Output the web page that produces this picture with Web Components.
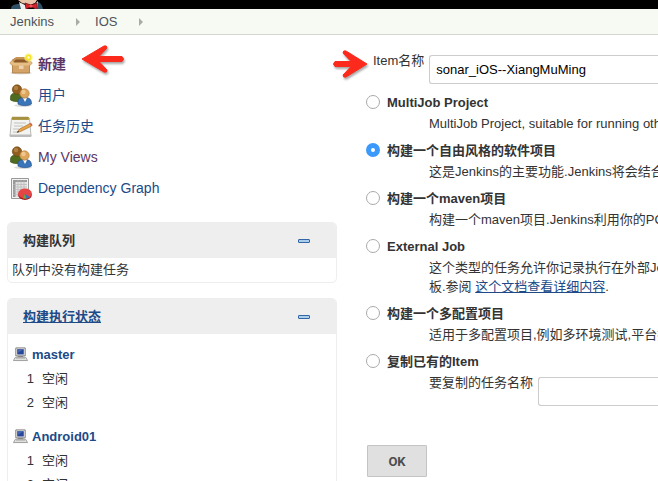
<!DOCTYPE html>
<html lang="zh-CN">
<head>
<meta charset="utf-8">
<meta name="viewport" content="width=device-width, initial-scale=1">
<title>New Item [Jenkins]</title>
<style>
  body {
    margin: 0;
    height: 100vh;
    overflow: hidden;
    background: #fff;
    color: #333;
    font: 13px/19px "Liberation Sans", "Noto Sans CJK SC", sans-serif;
  }
</style>
</head>
<body>
<jenkins-app></jenkins-app>

<script>
const icons = {
  package: `
    <svg viewBox="0 0 24 24">
      <ellipse cx="12" cy="20" rx="11" ry="1.500" fill="#ddd"/>
      <path d="M3.500 9h17v11h-17z" fill="#d3a368" stroke="#a9763a" stroke-width=".8"/>
      <path d="M3 7l3-2h12l3 2-1 3H4z" fill="#8b5a28"/>
      <path d="M4 6.500L7 4h11l2 2.500H7L4 9z" fill="#c79555"/>
      <path d="M.8 10L4 6.500 5.500 11 3 12.500zM23.300 10L20 6.500 18.500 11l2.500 1.500z" fill="#e4bc83" stroke="#b78345" stroke-width=".6"/>
      <path d="M3.500 9.500h17v3h-17z" fill="#e6bd82"/>
      <path d="M10 12.500h4.500V16H10z" fill="#ead2ae"/>
      <circle cx="19.500" cy="4.500" r="4.300" fill="#fff27a" opacity=".7"/>
      <circle cx="19.500" cy="4.500" r="3" fill="#f6e32e"/>
      <circle cx="19.500" cy="4.500" r="1.200" fill="#fffde0"/>
    </svg>`,
  users: `
    <svg viewBox="0 0 24 24">
      <ellipse cx="14" cy="21.500" rx="9" ry="1.500" fill="#ddd"/>
      <path d="M1.500 16c-.5-5 1-7 5.500-7 4 0 6 2 6.500 8-4 1-9 1-12-1z" fill="#4e6b20" stroke="#34480f" stroke-width=".6"/>
      <circle cx="8" cy="5.500" r="4.700" fill="#8f5d1f" stroke="#6b4210" stroke-width=".6"/>
      <circle cx="7" cy="4" r="2.200" fill="#b08040"/>
      <path d="M9 20c-.5-5 1-6.500 6.500-6.500s7 2 7 6.500c-3 2.200-10 2.200-13.500 0z" fill="#3b75b8" stroke="#204a87" stroke-width=".6"/>
      <path d="M14 14h4l-2 4z" fill="#fff"/>
      <circle cx="15.500" cy="9.500" r="4.700" fill="#dda65d" stroke="#b27430" stroke-width=".6"/>
      <circle cx="14.500" cy="8" r="2.200" fill="#f0c78d"/>
    </svg>`,
  notepad: `
    <svg viewBox="0 0 24 24">
      <path d="M2.500 3h18l1.500 18H1z" fill="#f3f3f1" stroke="#aaa" stroke-width=".8"/>
      <path d="M.8 19.500h21.500V22H.8z" fill="#bbb"/>
      <path d="M3 2h17v3H3z" fill="#b6a14f"/>
      <path d="M4 1.500v3m2-3v3m2-3v3m2-3v3m2-3v3m2-3v3m2-3v3m2-3v3" stroke="#8c7a2e" stroke-width=".8"/>
      <path d="M5 8h12M5 11h9M4 14h6M4 17h4" stroke="#c0c0c0"/>
      <path d="M8 17.500l2.500-3.500L21 8.500l1.700 2.500-11 5.500z" fill="#e9a246" stroke="#9c6825" stroke-width=".6"/>
      <path d="M20.500 8.700l1.500-1 1.700 2.500-1 .8z" fill="#d3604a"/>
      <path d="M8 17.500l1.200-1.800 1 1.200z" fill="#333"/>
    </svg>`,
  graph: `
    <svg viewBox="0 0 24 24">
      <path d="M2.500 1.500h17v20h-17z" fill="#f4f4f4" stroke="#999"/>
      <path d="M4 3h14v17H4z" fill="#e2e2e2"/>
      <path d="M4 3h14v2H4zM4 3h2.500v17H4z" fill="#999"/>
      <path d="M4 7.500h14M4 10h14M4 12.500h14M4 15h14M4 17.500h14M9 3v17M12 3v17M15 3v17" stroke="#b7b7b7" stroke-width=".7"/>
      <ellipse cx="16" cy="18" rx="6.800" ry="5" fill="#a81818"/>
      <ellipse cx="16" cy="16.500" rx="6.800" ry="5" fill="#e54545"/>
      <path d="M16 16.500l-2 5 3.500.3z" fill="#69a93e"/>
      <path d="M16 16.500l1.500 5.300 3.500-1.300z" fill="#3c72b4"/>
    </svg>`,
  computer: `
    <svg viewBox="0 0 16 16">
      <path d="M3 1.500h10v8.500H3z" fill="#eeeeec" stroke="#777"/>
      <path d="M4.500 3h7v5.500h-7z" fill="#26479a"/>
      <path d="M4.500 3h7L5 7z" fill="#4565b0"/>
      <path d="M5 10.500h6v1H5z" fill="#666"/>
      <path d="M2.500 11.500h11l2 3.500H.5z" fill="#e8e8e6" stroke="#999"/>
      <path d="M3 13h10" stroke="#b5b5b5"/>
    </svg>`,
  butler: `
    <svg viewBox="0 0 34 9">
      <path d="M1 9c0-4 4-5 9-5l6 5zM33 9c-1-4-2-6-5-7l-4 7z" fill="#2f4f66"/>
      <path d="M8 0h19l-2 3-5 2-8-2z" fill="#e8c3aa"/>
      <path d="M9 2l6 3 2 4h-6zM28 1l-3 3v5h2z" fill="#eee"/>
      <path d="M15 3l6 2 6-2v6l-6-2-5 2z" fill="#d8232f" stroke="#641514" stroke-width=".7"/>
      <circle cx="21" cy="6" r="1.600" fill="#f0555b"/>
    </svg>`,
  arrow: `
    <svg viewBox="0 0 48 32">
      <path d="M3 16L25 3q3-1 3 2L20 13.500h23q3 2.500 0 5H20l8 8.500q0 3-3 2z" fill="#fc2a1c" stroke="#fc2a1c" stroke-linejoin="round"/>
    </svg>`,
  'arrow-right': `
    <svg viewBox="0 0 40 32">
      <path d="M35 16L14 3q-3-1-3 2l8 8.500H3q-3 2.500 0 5h16L11 27q0 3 3 2z" fill="#fc2a1c" stroke="#fc2a1c" stroke-linejoin="round"/>
    </svg>`,
};

class JkIcon extends HTMLElement {
  constructor() {
    super();
    this.attachShadow({ mode: 'open' });
  }
  connectedCallback() {
    this.shadowRoot.innerHTML = `
    <style>
      :host {
        display: block;
        flex: none;
        width: 24px;
        height: 24px;
      }
      svg {
        display: block;
        width: 100%;
        height: 100%;
      }
    </style>
    ${icons[this.getAttribute('name')]}
    `;
  }
}

class TopBar extends HTMLElement {
  constructor() {
    super();
    this.attachShadow({ mode: 'open' });
  }
  connectedCallback() {
    this.shadowRoot.innerHTML = `
    <style>
      :host {
        display: block;
      }
      header {
        padding-left: 10px;
        background: #000;
      }
      header jk-icon {
        width: 34px;
        height: 9px;
      }
      ul {
        display: flex;
        align-items: center;
        margin: 0;
        padding: 0 10px;
        height: 25px;
        list-style: none;
        background: #f6faf2;
        border-bottom: 1px solid #d3d7cf;
      }
      li {
        display: flex;
        align-items: center;
      }
      li::after {
        content: "";
        margin: 0 15px 0 22px;
        border: 4px solid transparent;
        border-left-color: #a9aca6;
        border-right-width: 0;
      }
      a {
        color: #4d545d;
        text-decoration: none;
      }
    </style>
    <header><jk-icon name="butler"></jk-icon></header>
    <nav>
      <ul>
        <li><a href="#">Jenkins</a></li>
        <li><a href="#">IOS</a></li>
      </ul>
    </nav>
    `;
  }
}

class TaskLink extends HTMLElement {
  constructor() {
    super();
    this.attachShadow({ mode: 'open' });
  }
  connectedCallback() {
    this.shadowRoot.innerHTML = `
    <style>
      :host {
        display: block;
      }
      a {
        display: flex;
        align-items: center;
        gap: 5px;
        height: 31px;
        color: #204a87;
        font-size: 14px;
        text-decoration: none;
      }
      :host([visited]) a {
        color: #5c3566;
      }
      :host([current]) a {
        font-weight: bold;
      }
    </style>
    <a href="#"><jk-icon name="${this.getAttribute('icon')}"></jk-icon><span><slot></slot></span></a>
    `;
  }
}

class SidePane extends HTMLElement {
  constructor() {
    super();
    this.attachShadow({ mode: 'open' });
  }
  connectedCallback() {
    this.shadowRoot.innerHTML = `
    <style>
      :host {
        display: block;
        border: 1px solid #eee;
        border-radius: 5px;
        overflow: hidden;
      }
      .head {
        display: flex;
        align-items: center;
        justify-content: space-between;
        height: 35px;
        padding: 0 25px 0 15px;
        background: #eee;
        font-weight: bold;
      }
      button {
        width: 14px;
        height: 14px;
        padding: 5px 1px;
        border: 0;
        background: none;
      }
      button::before {
        content: "";
        display: block;
        box-sizing: border-box;
        width: 12px;
        height: 4px;
        border: 1px solid #3465a4;
        border-radius: 1px;
        background: #a9cdec;
      }
    </style>
    <div class="head">
      <slot name="title"></slot>
      <button type="button" aria-label="collapse"></button>
    </div>
    <slot></slot>
    `;
  }
}

class BuildNode extends HTMLElement {
  constructor() {
    super();
    this.attachShadow({ mode: 'open' });
  }
  connectedCallback() {
    this.shadowRoot.innerHTML = `
    <style>
      :host {
        display: block;
        padding: 8px 5px 2px;
      }
      a {
        display: flex;
        align-items: center;
        gap: 4px;
        height: 24px;
        color: #204a87;
        font-weight: bold;
        text-decoration: none;
      }
      jk-icon {
        width: 15px;
        height: 16px;
      }
      table {
        border-spacing: 0;
      }
      td {
        height: 24px;
        padding: 0;
      }
      td:first-child {
        width: 21px;
        padding-right: 8px;
        text-align: right;
        box-sizing: content-box;
      }
    </style>
    <a href="#"><jk-icon name="computer"></jk-icon><slot></slot></a>
    <table>
      <tr><td>1</td><td>空闲</td></tr>
      <tr><td>2</td><td>空闲</td></tr>
    </table>
    `;
  }
}

class SidePanel extends HTMLElement {
  constructor() {
    super();
    this.attachShadow({ mode: 'open' });
  }
  connectedCallback() {
    this.shadowRoot.innerHTML = `
    <style>
      :host {
        display: flex;
        flex-direction: column;
        gap: 15px;
        padding-top: 14px;
      }
      nav {
        padding: 0 2px 3px;
      }
      p {
        margin: 0;
        padding: 2px 4px 3px;
      }
      a {
        color: #204a87;
      }
    </style>
    <nav>
      <task-link icon="package" visited current>新建</task-link>
      <task-link icon="users">用户</task-link>
      <task-link icon="notepad">任务历史</task-link>
      <task-link icon="users" visited>My Views</task-link>
      <task-link icon="graph">Dependency Graph</task-link>
    </nav>
    <side-pane>
      <span slot="title">构建队列</span>
      <p>队列中没有构建任务</p>
    </side-pane>
    <side-pane>
      <a slot="title" href="#">构建执行状态</a>
      <build-node>master</build-node>
      <build-node>Android01</build-node>
    </side-pane>
    `;
  }
}

class TextField extends HTMLElement {
  constructor() {
    super();
    this.attachShadow({ mode: 'open' });
  }
  connectedCallback() {
    this.shadowRoot.innerHTML = `
    <style>
      :host {
        display: flex;
        align-items: flex-start;
        gap: 5px;
      }
      label {
        flex: none;
      }
      input {
        flex: 1;
        min-width: 0;
        box-sizing: border-box;
        height: 29px;
        margin: 4px 0 0;
        padding: 0 6px;
        border: 1px solid #ccc;
        border-right: 0;
        border-radius: 3px 0 0 3px;
        background: #fff;
        color: #000;
        font: inherit;
      }
    </style>
    <label for="field"><slot></slot></label>
    <input id="field" type="text" value="${this.getAttribute('value') || ''}">
    `;
  }
}

class JobType extends HTMLElement {
  constructor() {
    super();
    this.attachShadow({ mode: 'open' });
  }
  connectedCallback() {
    this.shadowRoot.innerHTML = `
    <style>
      :host {
        display: block;
        padding-bottom: 5px;
      }
      .title {
        display: flex;
        align-items: center;
        gap: 7px;
        height: 24px;
      }
      input {
        appearance: none;
        box-sizing: border-box;
        width: 14px;
        height: 14px;
        margin: 0;
        border: 1px solid #aaa;
        border-radius: 50%;
        background: #fff;
      }
      input:checked {
        border: 5px solid #3b99fc;
      }
      label {
        font-weight: bold;
      }
      .desc {
        padding-left: 63px;
        white-space: nowrap;
      }
    </style>
    <div class="title">
      <input id="mode" type="radio" name="mode" ${this.hasAttribute('checked') ? 'checked' : ''}>
      <label for="mode">${this.getAttribute('label')}</label>
    </div>
    <div class="desc"><slot></slot></div>
    `;
    this.radio = this.shadowRoot.querySelector('input');
    this.radio.addEventListener('change', () => {
      this.dispatchEvent(new CustomEvent('pick', { bubbles: true }));
    });
  }
}

class NewJobForm extends HTMLElement {
  constructor() {
    super();
    this.attachShadow({ mode: 'open' });
  }
  connectedCallback() {
    this.shadowRoot.innerHTML = `
    <style>
      :host {
        display: block;
        padding-top: 16px;
        overflow: hidden;
      }
      .name {
        padding: 0 0 6px 7px;
      }
      a {
        color: #204a87;
      }
      button {
        width: 60px;
        height: 32px;
        margin: 34px 0 0 1px;
        padding: 0;
        border: 1px solid #c4c4c4;
        border-radius: 1px;
        background: #e0e0e0;
        color: #4d4d4d;
        font: bold 13px Roboto, sans-serif;
      }
    </style>
    <form>
      <text-field class="name" value="sonar_iOS--XiangMuMing">Item名称</text-field>
      <job-type label="MultiJob Project">MultiJob Project, suitable for running other jobs</job-type>
      <job-type label="构建一个自由风格的软件项目" checked>这是Jenkins的主要功能.Jenkins将会结合任何SCM和任何构建系统来构建你的项目</job-type>
      <job-type label="构建一个maven项目">构建一个maven项目.Jenkins利用你的POM文件,这样可以大大减轻构建配置.</job-type>
      <job-type label="External Job">这个类型的任务允许你记录执行在外部Jenkins的任务<br>板.参阅 <a href="#">这个文档查看详细内容</a>.</job-type>
      <job-type label="构建一个多配置项目">适用于多配置项目,例如多环境测试,平台指定构建,等等.</job-type>
      <job-type label="复制已有的Item"><text-field>要复制的任务名称</text-field></job-type>
      <button type="button">OK</button>
    </form>
    `;
    // each radio lives in its own shadow root, so clear the others by hand
    this.shadowRoot.addEventListener('pick', (e) => {
      this.shadowRoot.querySelectorAll('job-type').forEach((job) => {
        job.radio.checked = job === e.target;
      });
    });
  }
}

class JenkinsApp extends HTMLElement {
  constructor() {
    super();
    this.attachShadow({ mode: 'open' });
  }
  connectedCallback() {
    this.shadowRoot.innerHTML = `
    <style>
      :host {
        display: block;
        position: relative;
      }
      main {
        display: grid;
        grid-template-columns: 330px minmax(0, 1fr);
        gap: 29px;
        padding-left: 7px;
      }
      .mark {
        position: absolute;
        top: 43px;
        left: 79px;
        width: 48px;
        height: 32px;
        filter: drop-shadow(1px 2px 1px rgba(0, 0, 0, .35));
        pointer-events: none;
      }
      .mark.right {
        top: 48px;
        left: 332px;
        width: 40px;
      }
    </style>
    <top-bar></top-bar>
    <main>
      <side-panel></side-panel>
      <new-job-form></new-job-form>
    </main>
    <jk-icon class="mark" name="arrow"></jk-icon>
    <jk-icon class="mark right" name="arrow-right"></jk-icon>
    `;
  }
}

customElements.define('jk-icon', JkIcon);
customElements.define('top-bar', TopBar);
customElements.define('task-link', TaskLink);
customElements.define('side-pane', SidePane);
customElements.define('build-node', BuildNode);
customElements.define('side-panel', SidePanel);
customElements.define('text-field', TextField);
customElements.define('job-type', JobType);
customElements.define('new-job-form', NewJobForm);
customElements.define('jenkins-app', JenkinsApp);
</script>
</body>
</html>
